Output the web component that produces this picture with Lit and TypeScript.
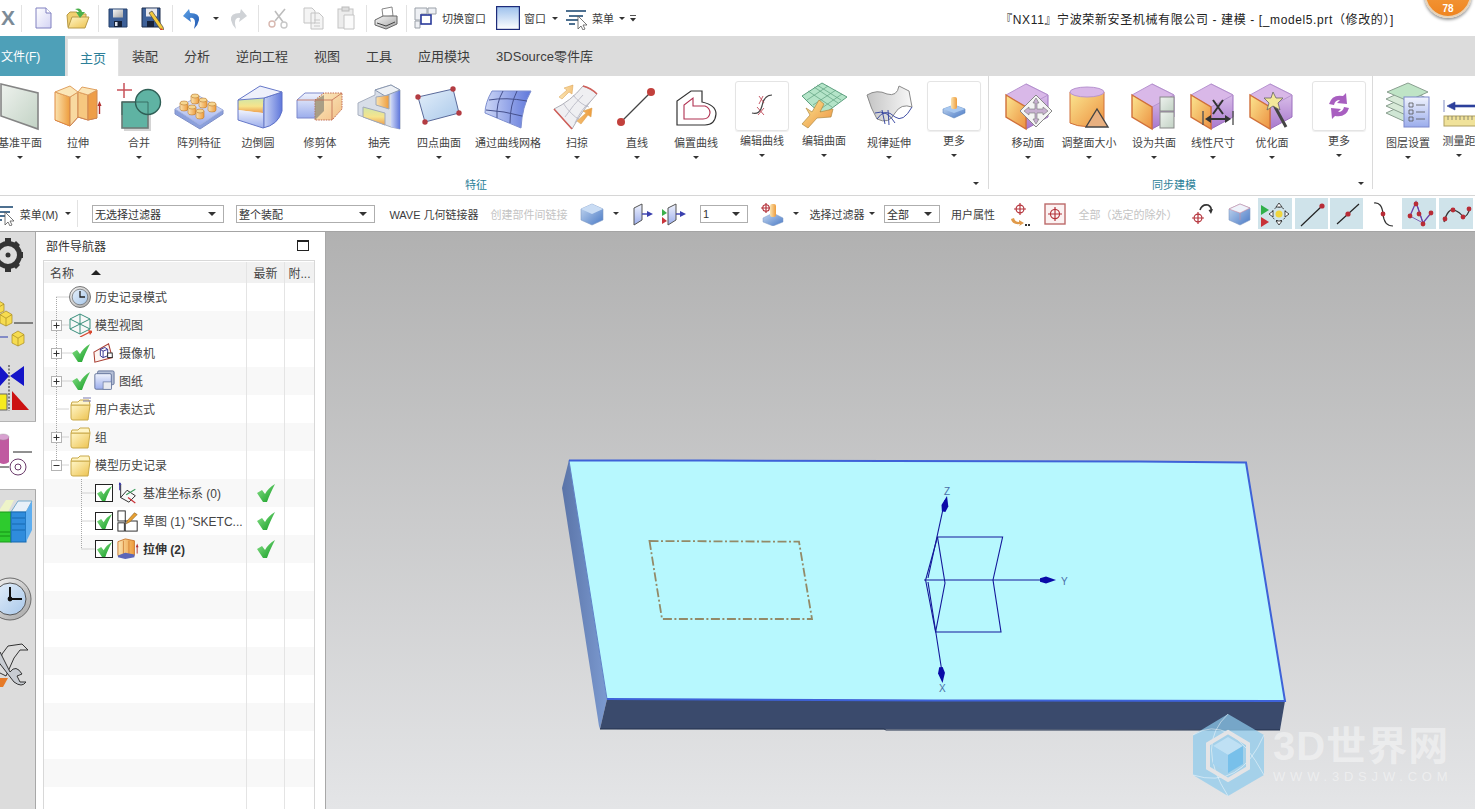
import { LitElement, html, css, svg, SVGTemplateResult, TemplateResult } from 'lit';
import { customElement } from 'lit/decorators.js';

// --- shared pieces of the icons ---
const cube = (over: SVGTemplateResult = svg``) => svg`
  <path d="M22 1 L44 12 L44 34 L22 46 Z" fill="url(#gPu)" stroke="#9b6fbe"/>
  <path d="M22 1 L44 12 L22 24 L2 12 Z" fill="#d9b8e8" stroke="#b794d0"/>
  <path d="M2 12 L22 24 L22 46 L2 34 Z" fill="url(#gYe)" stroke="#d0703a" stroke-width="1.4"/>
  ${over}`;

const cross = (x: number, y: number, r = 6) => svg`
  <circle cx=${x} cy=${y} r=${r * 0.65} fill="none" stroke="#b5343c" stroke-width="1.2"/>
  <path d="M${x - r} ${y} H${x + r} M${x} ${y - r} V${y + r}" stroke="#b5343c" stroke-width="1.2"/>`;

const folder = (lines = false) => svg`
  <path d="M3 8 L3 21 Q3 23 5 23 L20 23 L22 8 Z" fill="url(#gFo)" stroke="#c9a94a"/>
  <path d="M3 8 L4 5 L10 5 L12 3 L21 3 L22 8 Z" fill="#fff4c4" stroke="#c9a94a"/>
  ${lines ? svg`<path d="M15 1 H23 M15 4 H23" stroke="#7b7bb0" stroke-width="1.2"/>` : ''}`;

const tick = svg`<path d="M0 9 L5 6 L8 10 C10 6 13 3 18 0 C15 6 12 12 10 18 L6 18 Z" fill="url(#gGn)"/>`;

const ICONS: Record<string, SVGTemplateResult> = {
  // ribbon, 48 box
  plane: svg`<path d="M5 1 L42 10 L42 46 L5 33 Z" fill="url(#gPl)" stroke="#858585" stroke-width="1.6"/>`,
  extrude: svg`
    <path d="M1 37 L16 43 L24 34 L34 37 L43 35 L34 30 L14 30 Z" fill="#8f9fe0" stroke="#c06a50"/>
    <path d="M1 9 L16 14 L16 43 L1 37 Z" fill="url(#gOr)" stroke="#e08a40"/>
    <path d="M16 14 L24 9 L24 34 L16 43 Z" fill="#f8d9a0" stroke="#d08850"/>
    <path d="M24 9 L34 12 L34 37 L24 34 Z" fill="#f6c880" stroke="#d08850"/>
    <path d="M34 12 L43 7 L43 35 L34 37 Z" fill="#ee9e48" stroke="#d08850"/>
    <path d="M1 9 L16 3 L24 9 L16 14 Z M24 9 L28 4 L43 7 L34 12 Z" fill="#fbe6b8" stroke="#e0a060"/>
    <path d="M45.5 31 V21" stroke="#b03030" stroke-width="1.4"/><path d="M43.5 23 L45.5 18 L47.5 23 Z" fill="#b03030"/>`,
  merge: svg`
    <rect x="9" y="21" width="27" height="27" fill="#d4d4d4"/>
    <rect x="7" y="19" width="26" height="26" fill="#5fb3a3" stroke="#6d7a76" stroke-width="1.6"/>
    <circle cx="33" cy="19" r="12.5" fill="#5fb3a3" stroke="#2f5f56" stroke-width="1.4"/>
    <path d="M7 32 V19 H33 V31" fill="none" stroke="#2f5f56" stroke-width=".8"/>
    <path d="M2 7 H17 M9 0 V15" stroke="#c8525a" stroke-width="1.5"/>`,
  pattern: svg`
    <path d="M0 26 L25 42 L48 27 L48 31 L25 46 L0 31 Z" fill="#8ba0dc" stroke="#8090c8"/>
    <path d="M0 26 L24 13 L48 27 L25 42 Z" fill="url(#gBl)" stroke="#a4b2e0"/>
    ${[[20, 13], [28, 17], [37, 21], [9, 20], [17, 24], [25, 28]].map(([x, y]) => svg`
      <path d="M${x - 4} ${y} V${y + 6} A4 2 0 0 0 ${x + 4} ${y + 6} V${y} Z" fill="url(#gOr)" stroke="#bb7b30" stroke-width=".6"/>
      <ellipse cx=${x} cy=${y} rx="4" ry="2" fill="#f6d690" stroke="#bb7b30" stroke-width=".6"/>`)}`,
  blend: svg`
    <path d="M4 17 L26 3 L48 9 L48 28 Q48 40 29 45 L4 37 Z" fill="#eef1fb"/>
    <path d="M29 24 Q29 20 30 15 L48 9 L48 28 Q44 42 29 45 Z" fill="url(#gBlD)" stroke="#5b6fc8"/>
    <path d="M4 17 L30 15 Q28 28 29 30 L4 27 Z" fill="url(#gBand)"/>
    <path d="M4 27 L29 30 L29 45 L4 37 Z" fill="url(#gBl)"/>
    <path d="M4 17 L26 3 L48 9 L30 15 Z" fill="#eef0fb" stroke="#6678c8"/>
    <path d="M4 17 V37 L29 45 M30 15 V45" fill="none" stroke="#6678c8"/>`,
  trim: svg`
    <path d="M1 17 L9 10 L28 10 L28 35 L1 35 Z" fill="url(#gBl)" stroke="#7d88cc"/>
    <path d="M19 17 L28 10 L46 10 L46 26 L36 37 L19 37 Z" fill="url(#gYeL)" stroke="#c06a50" stroke-dasharray="1.5 1"/>
    <path d="M19 17 L28 12 L28 28 L19 37 Z" fill="#8f8a78" opacity=".75"/>
    <path d="M1 17 H19 M19 17 H36 L46 10 M36 17 V37" fill="none" stroke="#c06a50" stroke-width=".8"/>`,
  shell: svg`
    <path d="M3 20 L20 12 L20 7 L36 2 L45 7 L45 46 L36 44 L3 32 Z" fill="#d8dee8" stroke="#a8b0c0"/>
    <path d="M36 11 L45 7 L45 46 L36 44 Z" fill="url(#gBlD)"/>
    <path d="M20 7 L36 2 L45 7 L30 13 Z" fill="#eef1f5" stroke="#8a98b0"/>
    <path d="M8 24 L30 30 L30 42 L8 34 Z" fill="url(#gBand)" stroke="#a0a8b8"/>
    <path d="M21 14 L34 12 L34 26 L21 22 Z" fill="url(#gOr)" stroke="#a0a8b8"/>`,
  fourpt: svg`
    <path d="M3 14 L38 6 L44 30 L10 39 Z" fill="url(#gSky)" stroke="#5a6a9a"/>
    ${[[3, 14], [38, 6], [44, 30], [10, 39]].map(([x, y]) => svg`<circle cx=${x} cy=${y} r="2.7" fill="#b33c42"/>`)}`,
  mesh: svg`
    <path d="M8 8 L47 8 Q38 24 37 45 Q20 38 1 30 Q1 20 8 8 Z" fill="url(#gBlD)" stroke="#7e8fd0"/>
    <path d="M5 17 Q22 14 43 18 M2 27 Q20 28 38 33 M19 8 Q12 20 13 35 M33 8 Q26 22 26 40" fill="none" stroke="#45508c" stroke-width="1"/>`,
  sweep: svg`
    <path d="M1 26 Q18 18 30 3 Q38 5 44 11 Q30 26 19 46 Q10 36 1 26 Z" fill="#efeff2" stroke="#b0b0b8"/>
    <path d="M10 20 Q18 32 27 37 M20 12 Q28 22 36 24 M12 34 Q20 22 30 12 M22 40 Q28 26 38 18" fill="none" stroke="#b4b4c0" stroke-width=".8"/>
    <path d="M1 26 Q10 36 19 46 M30 3 Q38 5 44 11" fill="none" stroke="#d0605a" stroke-width="1.6"/>
    <path d="M6 14 L14 7 L11 5 L20 2 L19 11 L16 9 L9 16 Z M24 38 L33 30 L30 28 L39 25 L38 34 L35 32 L28 41 Z" fill="url(#gOr)" stroke="#d8a050" stroke-width=".5"/>`,
  line: svg`<path d="M8 39 L38 9" stroke="#444" stroke-width="1.2"/><circle cx="8" cy="39" r="4" fill="#c2403c"/><circle cx="38" cy="9" r="4" fill="#c2403c"/>`,
  offset: svg`
    <path d="M19 8 H30 V19 Q44 22 44 31 Q43 42 33 42 H5 V18 Z" fill="#fff" stroke="#333" stroke-width="1.2"/>
    <path d="M12 36 V22 L21 15 V23 H33 Q38 25 38 30 Q37 36 31 36 Z" fill="none" stroke="#b03050" stroke-width="1.1"/>`,
  editcurve: svg`
    <path d="M14 31 Q22 33 24 24 Q26 13 34 13" fill="none" stroke="#444" stroke-width="1.2"/>
    <path d="M21 14 L26 21 M25 14 L21 22 M19 25 L26 33 M26 26 L20 33" stroke="#c04858" stroke-width=".9"/>`,
  editsurf: svg`
    <path d="M2 14 L22 1 L47 15 L24 32 Q12 26 2 14 Z" fill="#b4e4c8" stroke="#5ea080"/>
    <path d="M8 9 L32 25 M14 5 L38 21 M17 3 L41 18 M7 18 L28 4 M13 23 L36 8 M19 28 L42 12" stroke="#5ea080" stroke-width=".7"/>
    <path d="M19 18 L24 22 L20 30 L33 27 L31 35 L17 36 L8 46 L2 42 L10 33 L6 26 L12 30 Z" fill="url(#gYe)" stroke="#b08a40" stroke-width=".7"/>`,
  law: svg`
    <path d="M2 12 Q12 6 22 11 Q32 14 34 3 L44 8 L47 24 Q36 20 30 30 Q24 42 12 36 Q6 26 2 12 Z" fill="url(#gSilk)" stroke="#8a8a8a"/>
    <path d="M12 36 Q20 24 30 34 Q38 40 47 24 M10 30 Q22 26 30 40 M17 27 L20 41 M23 27 L24 42" fill="none" stroke="#2c3c9c" stroke-width=".9"/>`,
  more: svg`
    <path d="M13 27 L24 23 L35 27 L35 31 L24 36 L13 31 Z" fill="url(#gSt)" stroke="#5f88c0" stroke-width=".6"/>
    <path d="M13 27 L24 31 L35 27 L24 23 Z" fill="#a8c8f0"/>
    <rect x="21" y="15" width="6" height="12" rx="2" fill="url(#gOr)"/>`,
  movef: cube(svg`
    <path d="M32 12 L48 28 L32 44 L16 28 Z" fill="#f4f4f4" stroke="#888"/>
    <path d="M32 15 L35 20 L33 20 V26 H39 V24 L44 28 L39 32 V30 H33 V36 H35 L32 41 L29 36 H31 V30 H25 V32 L20 28 L25 24 V26 H31 V20 H29 Z" fill="#c7afd0" stroke="#777" stroke-width=".6"/>`),
  resize: svg`
    <path d="M5 9 V40 Q20 47 39 40 V9 Z" fill="url(#gYe)" stroke="#d0703a"/>
    <ellipse cx="22" cy="9" rx="17" ry="5" fill="#d9b8e8" stroke="#b794d0"/>
    <path d="M32 26 L43 44 L21 44 Z" fill="#e8b080" stroke="#444" stroke-width="1.4"/>`,
  coplanar: cube(svg`
    <rect x="30" y="14" width="14" height="14" fill="url(#gPl)" stroke="#888"/>
    <rect x="30" y="29" width="14" height="16" fill="url(#gPl)" stroke="#888"/>`),
  dim: cube(svg`
    <path d="M24 17 L34 31 M34 17 L24 31" stroke="#333" stroke-width="2"/>
    <path d="M14 28 V42 M44 28 V42" stroke="#555" stroke-width="1.4"/>
    <path d="M16 36 L22 32 V35 H36 V32 L42 36 L36 40 V37 H22 V40 Z" fill="#333"/>`),
  optimize: cube(svg`
    <path d="M26 22 L38 44" stroke="#444" stroke-width="3"/>
    <path d="M25 9 L28 15 L35 15 L30 20 L32 27 L25 23 L19 27 L21 20 L16 15 L23 15 Z" fill="#f3e89a" stroke="#666" stroke-width=".8"/>`),
  cycle: svg`
    <path d="M14 22 Q17 12 28 14 L31 11 L32 22 L22 21 L25 18 Q20 18 19 23 Z M34 26 Q31 36 20 34 L17 37 L16 26 L26 27 L23 30 Q28 30 29 25 Z" fill="#a85fc0"/>`,
  layers: svg`
    <path d="M2 30 L24 20 L44 30 L24 40 Z" fill="#cfe6d4" stroke="#8aa090"/>
    <path d="M2 23 L24 13 L44 23 L24 33 Z" fill="#d8ead8" stroke="#8aa090"/>
    <path d="M2 16 L24 6 L44 16 L24 26 Z" fill="#d8ead8" stroke="#8aa090"/>
    <path d="M3 9 L24 0 L44 9 L24 18 Z" fill="#bfe4c6" stroke="#8aa090"/>
    <rect x="20" y="14" width="25" height="30" fill="url(#gBl)" stroke="#7d88cc"/>
    <path d="M25 20 h4 v4 h-4 Z M25 27 h4 v4 h-4 Z M25 34 h4 v4 h-4 Z M32 22 h9 M32 29 h9 M32 36 h9" fill="none" stroke="#555" stroke-width=".8"/>`,
  measure: svg`
    <path d="M9 18 V30 M12 24 L20 20 V23 H48 V25 H20 V28 Z" fill="#2d3f9c" stroke="#2d3f9c" stroke-width=".6"/>
    <rect x="9" y="34" width="40" height="10" fill="#f0e29a" stroke="#b0a060"/>
    <path d="M13 34 v4 M17 34 v4 M21 34 v4 M25 34 v4 M29 34 v4 M33 34 v4 M37 34 v4 M41 34 v4" stroke="#776" stroke-width=".8"/>`,

  // quick access, 24 box
  doc: svg`<path d="M5 2 H15 L20 7 V22 H5 Z" fill="url(#gLav)" stroke="#8080c0"/><path d="M15 2 V7 H20" fill="#fff" stroke="#8080c0"/>`,
  open: svg`
    <path d="M2 21 L1 9 L4 6 L11 6 L13 8 L20 8 L20 12 Z" fill="#f0d070" stroke="#b89a48"/>
    <path d="M2 22 L6 11 L23 11 L19 22 Z" fill="url(#gFo)" stroke="#b89a48"/>
    <path d="M9 3 Q15 1 16 6 L19 6 L14 12 L10 6 L13 6 Q12 4 9 3 Z" fill="#4bb04b"/>`,
  save: svg`<path d="M3 3 H21 V21 H3 Z" fill="#3d6098" stroke="#24406c"/><rect x="7" y="3.5" width="10" height="8" fill="url(#gGr)"/><rect x="8" y="15" width="8" height="6" fill="#16223a"/><rect x="9" y="16" width="2.5" height="4" fill="#dfe4ee"/>`,
  saveas: svg`<path d="M2 2 H20 V21 H2 Z" fill="#3d6098" stroke="#1c2c4c"/><rect x="6" y="2.5" width="11" height="8" fill="#e8e8ec"/><rect x="7" y="15" width="7" height="6" fill="#16223a"/>
    <path d="M9 7 L12 5 L23 21 L24 25 L20 23 Z" fill="#f2c93a" stroke="#444" stroke-width=".7"/><path d="M21 22 L24 25 L20 24 Z" fill="#d33"/>`,
  undo: svg`<path d="M4 10 L10 3 L11 7 Q21 7 20 14 Q19 19 15 23 Q17 15 15 13 Q13 11 11 12 L12 16 Z" fill="url(#gUn)"/>`,
  redo: svg`<path d="M21 10 L15 3 L14 7 Q4 7 5 14 Q6 19 10 23 Q8 15 10 13 Q12 11 14 12 L13 16 Z" fill="#cfd2d6"/>`,
  cut: svg`<path d="M19 3 L9 15 M9 5 L17 16" stroke="#bdbdbd" stroke-width="1.6"/><circle cx="6" cy="18" r="3" fill="#fff" stroke="#d8b8b0" stroke-width="1.4"/><circle cx="18" cy="19" r="3" fill="#fff" stroke="#c8c8c8" stroke-width="1.4"/>`,
  copy: svg`<path d="M3 2 H11 L14 5 V17 H3 Z M10 7 H18 L22 11 V23 H10 Z" fill="#f4f4f4" stroke="#c4c4c4"/><path d="M13 14 H19 M13 17 H19 M13 20 H19" stroke="#c8c8c8"/>`,
  paste: svg`<rect x="4" y="3" width="15" height="19" fill="#ececec" stroke="#c4c4c4"/><rect x="8" y="1" width="7" height="4" fill="#ddd" stroke="#bbb"/><path d="M10 9 H20 V23 H10 Z" fill="#fafafa" stroke="#c4c4c4"/>`,
  print: svg`<path d="M8 3 L18 1 L19 10 L9 11 Z" fill="#fff" stroke="#888"/><path d="M1 14 L9 10 L23 10 L23 18 L12 23 L1 19 Z" fill="url(#gGr)" stroke="#666"/><path d="M3 17 L12 20 L21 16" fill="none" stroke="#444"/>`,
  swap: svg`<path d="M1 2 H13 V8 H7 V14 H1 Z M1 15 H6 V22 H1 Z M14 2 H22 V8 H14 Z" fill="#eef0f4" stroke="#9aa0a8"/><rect x="7" y="9" width="10" height="9" fill="#fff" stroke="#2a3a9a" stroke-width="1.6"/>`,
  win: svg`<rect x=".5" y=".5" width="23" height="23" fill="url(#gWin)" stroke="#1d2b7a" stroke-width="1.4"/>`,
  menu: svg`<path d="M1 5 H21 M4 10 H18 M1 14 H13 M4 18 H10" stroke="#4d7090" stroke-width="2"/><path d="M13 10 V23 L16 20 L18 24 L20 23 L18 19 L22 19 Z" fill="#fff" stroke="#555" stroke-width=".8"/>`,

  // command bar
  boxb: svg`<path d="M12 2 L23 7 V18 L12 23 L1 18 V7 Z" fill="url(#gSt)" stroke="#7f9ac4" stroke-width=".6"/><path d="M12 2 L23 7 L12 12 L1 7 Z" fill="#c9dcf4"/>`,
  toface: svg`<path d="M5 6 L13 2 V18 L5 23 Z" fill="url(#gBl)" stroke="#555"/><path d="M13 12 H21" stroke="#3a3fae" stroke-width="1.4"/><path d="M18 9 L24 12 L18 15 Z" fill="#3a3fae"/>`,
  toface2: svg`<path d="M6 6 L14 2 V18 L6 23 Z" fill="url(#gBl)" stroke="#555"/><path d="M14 12 H21" stroke="#3a3fae" stroke-width="1.4"/><path d="M18 9 L24 12 L18 15 Z" fill="#3a3fae"/><path d="M0 7 L5 11 L0 14 Z" fill="#3cb04a"/><path d="M0 15 L5 19 L0 22 Z" fill="#c8343a"/>`,
  peg: svg`${cross(6, 6, 5)}<path d="M3 16 L13 11 L23 16 L23 20 L13 24 L3 20 Z" fill="url(#gSt)" stroke="#7f9ac4" stroke-width=".5"/><rect x="10" y="2" width="6" height="13" rx="2" fill="url(#gOr)"/>`,
  crossarrow: svg`${cross(13, 7, 6)}<path d="M4 17 Q5 23 13 22 L12 24 L17 21 L12 18 L12 20 Q8 20 7 16 Z" fill="#e09a4a"/><path d="M18 22 h2 v2 h-2 Z M21 22 h2 v2 h-2 Z" fill="#333"/>`,
  crossbox: svg`<rect x="2" y="2" width="20" height="20" fill="#fbf2f2" stroke="#bc6a6a" stroke-width="1.4"/>${cross(12, 12, 7)}`,
  crossrot: svg`${cross(9, 16, 6)}<path d="M11 8 Q13 2 19 3 Q23 5 22 9" fill="none" stroke="#333" stroke-width="1.6"/><path d="M19.5 8 L24 7 L22 12 Z" fill="#333"/>`,
  bowl: svg`<path d="M2 7 L13 2 L23 6 V18 L13 23 L2 18 Z" fill="url(#gSt)" stroke="#7f9ac4" stroke-width=".6"/><path d="M2 7 L13 2 L23 6 L13 11 Z" fill="#eef3fb" stroke="#d08aa0" stroke-width=".6"/><path d="M13 11 V18" stroke="#d08aa0" stroke-width=".6"/>`,
  tselect: svg`<path d="M2 6 L10 11 L2 16 Z" fill="#2fb04a"/><path d="M2 18 L10 23 L2 28 Z" fill="#c83238"/>
    <circle cx="20" cy="15" r="7" fill="none" stroke="#333" stroke-dasharray="2 2"/><circle cx="20" cy="15" r="3.5" fill="#f1d63c"/>
    <path d="M20 4 L23 8 H17 Z M20 26 L23 22 H17 Z M10 15 L14 12 V18 Z M30 15 L26 12 V18 Z" fill="#fff" stroke="#222" stroke-width=".8"/>`,
  tline: svg`<path d="M5 27 L26 7" stroke="#222" stroke-width="1.2"/><circle cx="26" cy="7" r="2.6" fill="#b82c36"/>`,
  tmid: svg`<path d="M6 25 L28 5" stroke="#222" stroke-width="1.2"/><circle cx="17" cy="15" r="2.6" fill="#b82c36"/>`,
  tcurve: svg`<path d="M1 4 Q9 3 10 15 Q11 27 20 27" fill="none" stroke="#333" stroke-width="1.2"/><circle cx="10" cy="15" r="2.4" fill="#b82c36"/>`,
  tpoly: svg`<path d="M7 17 L13 3 L20 24 L28 14" fill="none" stroke="#6a3fa8" stroke-width="1.3"/><path d="M13 3 L20 24 M7 17 L20 24" fill="none" stroke="#6a3fa8" stroke-width=".8"/>
    ${[[7, 17], [13, 5], [20, 25], [28, 14], [16, 15]].map(([x, y]) => svg`<circle cx=${x} cy=${y} r="2.4" fill="#b82c36"/>`)}`,
  tspline: svg`<path d="M4 23 Q8 9 14 11 Q20 13 23 18 Q28 18 30 8" fill="none" stroke="#333" stroke-width="1.2"/>
    ${[[5, 20], [13, 11], [23, 18], [29, 10]].map(([x, y]) => svg`<circle cx=${x} cy=${y} r="2.4" fill="#b82c36"/>`)}`,

  // navigator tree
  clock: svg`<circle cx="12" cy="12" r="10.5" fill="url(#gGr)" stroke="#777"/><circle cx="12" cy="12" r="7.8" fill="url(#gSky)" stroke="#555" stroke-width=".6"/><path d="M12 6 V12 H17" fill="none" stroke="#222" stroke-width="1.3"/>`,
  viewc: svg`<path d="M12 1 L22 6 V16 L12 21 L2 16 V6 Z M2 6 L12 11 L22 6 M12 11 V21 M2 16 L12 11 L22 16 M12 1 V11" fill="none" stroke="#3a8f7c" stroke-width="1"/><path d="M12 24 L22 19" stroke="#d84830" stroke-width="1.3"/><path d="M20 17 L25 18 L22 22 Z" fill="#d84830"/>`,
  camera: svg`<path d="M1 11 L17 2 L21 17 L2 22 Z" fill="#fdf6f2" stroke="#a83c30" stroke-width="1.1"/><path d="M8 8 L13 6 L16 8 V15 L11 17 L8 15 Z M8 8 L11 10 L16 8 M11 10 V17" fill="#fff" stroke="#2a2a8c"/><rect x="16" y="12" width="5" height="5" fill="#fff" stroke="#222"/>`,
  sheets: svg`<rect x="5" y="1" width="18" height="15" rx="1.5" fill="#b4bfd6" stroke="#5f7098"/><rect x="2" y="4" width="18" height="17" rx="1.5" fill="url(#gBl)" stroke="#5f7098"/><rect x="11" y="13" width="9" height="8" fill="#e8eaf0" stroke="#5f7098" stroke-width=".7"/>`,
  folderopen: folder(true),
  folder: folder(),
  csys: svg`<path d="M4 3 V17 L13 22 L20 15 L11 9 L4 17" fill="none" stroke="#222"/><path d="M3 1 V9" stroke="#2a2a9c" stroke-width="1.2"/><path d="M2 3 L3 0 L5 3 Z" fill="#2a2a9c"/><path d="M10 14 L20 8" stroke="#3a9c5a" stroke-width="1.2"/><path d="M12 17 L20 23" stroke="#c83238" stroke-width="1.4"/>`,
  sketch: svg`<rect x="1" y="1" width="8" height="11" fill="#fff" stroke="#222"/><rect x="1" y="14" width="7" height="9" fill="#fff" stroke="#222"/><rect x="9" y="12" width="13" height="11" fill="#fff" stroke="#222"/><path d="M11 12 L19 3 L22 5 L14 13 L10 15 Z" fill="#e8a030" stroke="#7a5520" stroke-width=".6"/>`,
  minibody: svg`<path d="M1 4 L9 1 L19 3 V19 L9 21 L1 19 Z" fill="url(#gOr)" stroke="#c9762c"/><path d="M7 3 V20 M13 3 V20" stroke="#c9762c" stroke-width=".8"/><path d="M1 19 L9 16 L19 18 L19 21 L9 23 L1 21 Z" fill="#5c66b8"/><path d="M22 17 V9" stroke="#b03030"/><path d="M20.5 10 L22 6 L23.5 10 Z" fill="#b03030"/>`,
};

const icon = (name: string, size = 24, box = size) =>
  html`<svg class="ic" width=${size} height=${size} viewBox=${`0 0 ${box} ${box}`}>${ICONS[name]}</svg>`;

// --- ribbon data ---
interface Cmd { label: string; w: number; icon: string; boxed?: boolean; up?: boolean; }

const FEATURES: Cmd[] = [
  { label: '基准平面', w: 60, icon: 'plane' },
  { label: '拉伸', w: 56, icon: 'extrude' },
  { label: '合并', w: 66, icon: 'merge' },
  { label: '阵列特征', w: 54, icon: 'pattern' },
  { label: '边倒圆', w: 64, icon: 'blend' },
  { label: '修剪体', w: 60, icon: 'trim' },
  { label: '抽壳', w: 58, icon: 'shell' },
  { label: '四点曲面', w: 62, icon: 'fourpt' },
  { label: '通过曲线网格', w: 76, icon: 'mesh' },
  { label: '扫掠', w: 62, icon: 'sweep' },
  { label: '直线', w: 58, icon: 'line' },
  { label: '偏置曲线', w: 60, icon: 'offset' },
  { label: '编辑曲线', w: 72, icon: 'editcurve', boxed: true, up: true },
  { label: '编辑曲面', w: 52, icon: 'editsurf', up: true },
  { label: '规律延伸', w: 78, icon: 'law' },
  { label: '更多', w: 52, icon: 'more', boxed: true, up: true },
];

const SYNC: Cmd[] = [
  { label: '移动面', w: 68, icon: 'movef' },
  { label: '调整面大小', w: 54, icon: 'resize' },
  { label: '设为共面', w: 76, icon: 'coplanar' },
  { label: '线性尺寸', w: 42, icon: 'dim' },
  { label: '优化面', w: 76, icon: 'optimize' },
  { label: '更多', w: 58, icon: 'cycle', boxed: true, up: true },
];

const LAST: Cmd[] = [
  { label: '图层设置', w: 58, icon: 'layers' },
  { label: '测量距', w: 44, icon: 'measure', up: true },
];

const TABS = ['装配', '分析', '逆向工程', '视图', '工具', '应用模块', '3DSource零件库'];

// --- bars: [gap before, width, content] ---
type Slot = [number, number, TemplateResult];
const sep = html`<i class="sep"></i>`;
const drop = html`<i class="drop"></i>`;
const txt = (s: string, cls = '') => html`<span class="tx ${cls}">${s}</span>`;
const sel = (s: string) => html`<div class="select"><span>${s}</span><i class="drop"></i></div>`;
const tog = (name: string) =>
  html`<div class="toggle"><svg width="32" height="30" viewBox="0 0 32 30">${ICONS[name]}</svg></div>`;

const QUICK: Slot[] = [
  [0, 16, html`<span class="logo">X</span>`],
  [5, 1, sep], [9, 24, icon('doc')], [11, 24, icon('open')],
  [8, 1, sep], [7, 24, icon('save')], [10, 24, icon('saveas')],
  [8, 1, sep], [6, 24, icon('undo')], [10, 6, drop], [7, 24, icon('redo')],
  [8, 1, sep], [7, 24, icon('cut')], [11, 24, icon('copy')], [9, 24, icon('paste')],
  [8, 1, sep], [7, 24, icon('print')],
  [8, 1, sep], [7, 24, icon('swap')], [4, 44, txt('切换窗口')],
  [10, 24, icon('win')], [4, 22, txt('窗口')], [6, 6, drop],
  [7, 24, icon('menu')], [3, 22, txt('菜单')], [5, 6, drop],
  [5, 6, html`<svg width="6" height="7" viewBox="0 0 6 7"><path d="M0 .5 H6" stroke="#555"></path><path d="M0 3 H6 L3 6.5 Z" fill="#333"></path></svg>`],
];

const COMMANDS: Slot[] = [
  [-8, 24, icon('menu')], [0, 46, txt('菜单(M)')], [0, 12, drop],
  [3, 1, sep], [14, 132, sel('无选择过滤器')], [12, 139, sel('整个装配')],
  [14, 90, txt('WAVE 几何链接器')], [11, 78, txt('创建部件间链接', 'off')],
  [12, 24, icon('boxb')], [9, 6, drop], [9, 26, icon('toface')], [8, 24, icon('toface2')],
  [14, 48, sel('1')], [12, 24, icon('peg')], [9, 6, drop], [9, 58, txt('选择过滤器')], [3, 6, drop],
  [9, 56, sel('全部')], [11, 44, txt('用户属性')], [12, 24, icon('crossarrow')],
  [12, 24, icon('crossbox')], [13, 96, txt('全部（选定的除外）', 'off')],
  [13, 24, icon('crossrot')], [14, 24, icon('bowl')],
  [7, 34, tog('tselect')], [3, 33, tog('tline')], [2, 33, tog('tmid')],
  [10, 20, html`<svg width="20" height="30" viewBox="0 0 20 30">${ICONS.tcurve}</svg>`],
  [9, 34, tog('tpoly')], [3, 34, tog('tspline')],
];

// --- navigator data ---
interface Node { label: string; icon: string; kind: 'root' | 'check' | 'child'; exp?: '+' | '-'; bold?: boolean; latest?: boolean; }

const TREE: Node[] = [
  { label: '历史记录模式', icon: 'clock', kind: 'root' },
  { label: '模型视图', icon: 'viewc', kind: 'root', exp: '+' },
  { label: '摄像机', icon: 'camera', kind: 'check', exp: '+' },
  { label: '图纸', icon: 'sheets', kind: 'check', exp: '+' },
  { label: '用户表达式', icon: 'folderopen', kind: 'root' },
  { label: '组', icon: 'folder', kind: 'root', exp: '+' },
  { label: '模型历史记录', icon: 'folder', kind: 'root', exp: '-' },
  { label: '基准坐标系 (0)', icon: 'csys', kind: 'child', latest: true },
  { label: '草图 (1) "SKETC...', icon: 'sketch', kind: 'child', latest: true },
  { label: '拉伸 (2)', icon: 'minibody', kind: 'child', latest: true, bold: true },
];
const TREE_ROWS = 19;

@customElement('app-root')
export class AppRoot extends LitElement {
  static styles = css`
    :host {
      display: flex;
      flex-direction: column;
      width: 1475px;
      height: 809px;
      overflow: hidden;
      position: relative;
      background: #fff;
      color: #444;
      font: 11px "Liberation Sans", "Noto Sans CJK SC", sans-serif;
    }
    .defs { position: absolute; width: 0; height: 0; }
    .ic { display: block; flex: none; }

    .bar { display: flex; align-items: center; flex: none; }
    .slot { display: flex; align-items: center; justify-content: center; flex: none; white-space: nowrap; }
    .sep { display: block; width: 1px; height: 27px; background: #e2e2e2; }
    .drop { display: block; width: 0; height: 0; border: 3px solid transparent; border-top: 3px solid #333; border-bottom: 0; }
    .tx { color: #3c3c3c; }
    .tx.off { color: #c4c4c4; }

    .quick { height: 36px; }
    .logo { font-size: 21px; font-weight: 700; color: #7c8b97; }
    .title { margin-left: auto; padding-right: 81px; font-size: 12px; letter-spacing: .62px; color: #222; white-space: nowrap; }
    .badge {
      position: absolute; left: 1424px; top: -30px; width: 48px; height: 48px;
      box-sizing: border-box; padding-top: 31px; border-radius: 50%;
      background: linear-gradient(#f6a94e, #ef8420);
      border: 2px solid #e6d2b8; box-shadow: 0 2px 3px #999;
      color: #fff; font-size: 10px; font-weight: 700; text-align: center;
    }

    .tabs { display: flex; height: 40px; flex: none; background: #dcdcdc; align-items: flex-end; font-size: 13px; }
    .tabs > div { display: flex; align-items: center; height: 40px; box-sizing: border-box; padding: 0 13px 2px; color: #3c3c3c; white-space: nowrap; }
    .tabs .file { width: 65px; padding: 0 0 2px 1px; background: #4ea0b8; color: #fff; font-size: 12px; margin-right: 2px; }
    .tabs .home { height: 38px; background: #fff; color: #2c7f98; border: 1px solid #e2e2e2; border-bottom: 0; width: 52px; justify-content: center; padding: 0; }

    .ribbon { display: flex; height: 119px; flex: none; }
    .group { display: flex; flex-direction: column; position: relative; flex: none; }
    .group.first { margin-left: -10px; width: 998px; border-right: 1px solid #dadada; margin-bottom: 6px; }
    .group.second { width: 384px; border-right: 1px solid #dadada; margin-bottom: 6px; padding-left: 5px; box-sizing: border-box; }
    .group.third { padding-left: 6px; }
    .cmds { display: flex; height: 98px; flex: none; }
    .cmd { flex: none; display: flex; flex-direction: column; align-items: center; padding-top: 8px; white-space: nowrap; color: #444; }
    .cmd .slot { height: 46px; width: 48px; overflow: visible; }
    .cmd .ic { overflow: visible; }
    .cmd .lab { margin-top: 6px; height: 15px; line-height: 15px; }
    .cmd .drop { margin-top: 5px; }
    .cmd.up { padding-top: 5px; }
    .cmd.up .slot { height: 50px; }
    .cmd.up .lab { margin-top: 3px; }
    .cmd.boxed .slot { width: 54px; box-sizing: border-box; border: 1px solid #e4e4e4; border-radius: 3px; box-shadow: 0 1px 1px #eee; }
    .glabel { margin-top: 4px; text-align: center; color: #2c7f98; line-height: 14px; }
    .first .glabel { padding-right: 26px; }
    .second .glabel { padding-right: 18px; }
    .gexp { position: absolute; right: 9px; bottom: 4px; }
    .second .gexp { right: 8px; }

    .commandbar { height: 37px; box-sizing: border-box; border-top: 1px solid #d6d6d6; border-bottom: 1px solid #a4a4a4; }
    .select {
      display: flex; align-items: center; justify-content: space-between;
      width: 100%; height: 18px; box-sizing: border-box; padding: 0 7px 0 2px;
      border: 1px solid #aeaeae; color: #333; background: #fff;
    }
    .select .drop { border-width: 4px 4px 0; }
    .toggle { display: flex; align-items: center; justify-content: center; width: 100%; height: 31px; background: #cfe3ea; }

    .main { flex: 1; display: flex; min-height: 0; }
    .rail { width: 36px; flex: none; display: flex; flex-direction: column; border-right: 1px solid #a8a8a8; box-sizing: border-box; background: #dcdcdc; }
    .rail svg { display: block; }
    .rail .active { background: #fff; height: 69px; margin-right: -1px; border-top: 1px solid #b4b4b4; border-bottom: 1px solid #b4b4b4; box-sizing: border-box; }
    .rail .top { height: 189px; }
    .rail .bottom { flex: 1; }

    .nav { width: 290px; flex: none; box-sizing: border-box; border-right: 1px solid #a8a8a8; padding: 0 10px 0 7px; display: flex; flex-direction: column; background: #fff; }
    .nav-head { display: flex; align-items: center; justify-content: space-between; height: 28px; padding: 0 6px 2px 3px; box-sizing: border-box; font-size: 12px; color: #333; flex: none; }
    .maxi { width: 12px; height: 11px; box-sizing: border-box; border: 1px solid #222; border-top-width: 2px; }
    .table { flex: 1; border: 1px solid #d8d8d8; border-bottom: 0; position: relative; overflow: hidden; min-height: 0; box-sizing: border-box; }
    .row { display: flex; height: 28px; font-size: 12px; color: #444; }
    .row.head { height: 21px; margin-top: 1px; background: #f1f1f1; }
    .row:nth-child(even):not(.head) { background: #f8f8f8; }
    .c1 { width: 202px; flex: none; display: flex; align-items: center; white-space: nowrap; overflow: hidden; box-sizing: border-box; }
    .c2 { width: 38px; flex: none; display: flex; align-items: center; justify-content: center; box-sizing: border-box; border-left: 1px solid #e4e4e4; }
    .c3 { flex: 1; display: flex; align-items: center; justify-content: center; border-left: 1px solid #e4e4e4; }
    .head .c1 { padding-left: 6px; }
    .sort { width: 0; height: 0; margin-left: 17px; border: 5px solid transparent; border-top: 0; border-bottom: 5px solid #222; }
    .exp { width: 11px; height: 11px; flex: none; margin-left: 7px; position: relative; z-index: 1; background: #fff; }
    .noexp { width: 11px; flex: none; margin-left: 7px; }
    .body { position: relative; }
    .wires { position: absolute; left: 0; top: 0; }
    .row .name { position: relative; margin-bottom: 2px; }
    .root .ic { margin-left: 6px; }
    .root .name { margin-left: 3px; }
    .check .exp + .ic { margin-left: 10px; }
    .check .ic + .ic { margin-left: 3px; }
    .check .name { margin-left: 4px; }
    .cbx { width: 18px; height: 18px; margin-left: 51px; flex: none; box-sizing: border-box; border: 1.5px solid #222; background: #fff; display: flex; align-items: center; justify-content: center; }
    .child > .c1 > .ic { margin-left: 4px; }
    .child .name { margin-left: 4px; }
    .bold { font-weight: 700; color: #333; }

    .canvas { flex: 1; position: relative; background: linear-gradient(#b1b1b1, #e4e5e7); overflow: hidden; }
    .canvas > svg { position: absolute; left: 0; top: 0; }
    .mark { position: absolute; left: 947px; top: 492px; color: rgba(255, 255, 255, .42); text-align: left; white-space: nowrap; }
    .mark b { display: block; font-size: 40px; line-height: 44px; letter-spacing: 1px; }
    .mark span { display: block; margin-top: 2px; font-size: 13px; line-height: 14px; letter-spacing: 4.8px; }
  `;

  private bar(items: Slot[]) {
    return items.map(
      ([gap, w, el]) => html`<div class="slot" style="width:${w}px;margin-left:${gap}px">${el}</div>`
    );
  }

  private cmd(c: Cmd) {
    const cls = `cmd${c.boxed ? ' boxed' : ''}${c.up ? ' up' : ''}`;
    return html`
      <div class=${cls} style="width:${c.w}px">
        <div class="slot">${icon(c.icon, 48)}</div>
        <div class="lab">${c.label}</div>
        <i class="drop"></i>
      </div>
    `;
  }

  private expander(kind: '+' | '-') {
    return html`<svg class="exp" viewBox="0 0 11 11">
      <rect x=".5" y=".5" width="10" height="10" fill="#fff" stroke="#b4b4b4"></rect>
      <path d=${kind === '+' ? 'M2.5 5.5 H8.5 M5.5 2.5 V8.5' : 'M2.5 5.5 H8.5'} stroke="#333"></path>
    </svg>`;
  }

  private node(n: Node) {
    const exp = n.exp ? this.expander(n.exp) : html`<span class="noexp"></span>`;
    const latest = n.latest
      ? html`<svg width="18" height="18" viewBox="0 0 18 18">${tick}</svg>`
      : '';
    let lead: TemplateResult;
    if (n.kind === 'child') {
      lead = html`<span class="cbx"><svg width="15" height="15" viewBox="0 0 18 18">${tick}</svg></span>${icon(n.icon, 22, 24)}`;
    } else if (n.kind === 'check') {
      lead = html`${exp}<svg class="ic" width="18" height="18" viewBox="0 0 18 18">${tick}</svg>${icon(n.icon, 22, 24)}`;
    } else {
      lead = html`${exp}${icon(n.icon)}`;
    }
    return html`
      <div class="row ${n.kind}">
        <div class="c1">${lead}<span class="name ${n.bold ? 'bold' : ''}">${n.label}</span></div>
        <div class="c2">${latest}</div>
        <div class="c3"></div>
      </div>
    `;
  }

  private renderDefs() {
    const grad = (id: string, a: string, b: string, x2 = 0, y2 = 1) => svg`
      <linearGradient id=${id} x1="0" y1="0" x2=${x2} y2=${y2}><stop offset="0" stop-color=${a}></stop><stop offset="1" stop-color=${b}></stop></linearGradient>`;
    return html`<svg class="defs"><defs>
      ${grad('gOr', '#fae3b0', '#ee9c3c', 1, 0)}
      ${grad('gBl', '#f0f3fd', '#9badec')}
      ${grad('gBlD', '#ccd6f6', '#5f77db', 1, 0)}
      ${grad('gPu', '#e8d2f2', '#a878cc', 0, 1)}
      ${grad('gYe', '#fbe690', '#ec9040', 1, 1)}
      ${grad('gYeL', '#fbecc0', '#f2bf88', 1, 1)}
      ${grad('gPl', '#eef2ee', '#c2d2c4', 1, 1)}
      ${grad('gFo', '#fff6c8', '#edc24e', 1, 1)}
      ${grad('gGr', '#f6f6f6', '#a4a4a4', 1, 1)}
      ${grad('gSilk', '#c4c4c4', '#f8f8f8', 1, 0)}
      ${grad('gGn', '#8ee48e', '#0f9a1f', 1, 1)}
      ${grad('gSky', '#e4effa', '#a9c8ea', 1, 1)}
      ${grad('gSt', '#c5d8f0', '#4a7ac6', 1, 1)}
      ${grad('gLav', '#ffffff', '#d4d4f4', 1, 1)}
      ${grad('gUn', '#5da2e6', '#1f56b0', 1, 1)}
      ${grad('gWin', '#9cc0ec', '#ffffff', 0, 1)}
      ${grad('gSide', '#5a74a8', '#7c9ad0', 1, 0)}
      <linearGradient id="gBand" x1="0" y1="0" x2="0" y2="1">
        <stop offset="0" stop-color="#cfe6a8"></stop><stop offset=".55" stop-color="#f6e48c"></stop><stop offset="1" stop-color="#ee9c4c"></stop>
      </linearGradient>
    </defs></svg>`;
  }

  private renderRail() {
    const yellowCube = (x: number, y: number, s: number) => svg`
      <path d="M${x} ${y + s * 0.3} L${x + s * 0.5} ${y} L${x + s} ${y + s * 0.3} L${x + s} ${y + s} L${x + s * 0.5} ${y + s * 1.25} L${x} ${y + s} Z" fill="#f6dc50" stroke="#a88a20" stroke-width=".7"></path>
      <path d="M${x} ${y + s * 0.3} L${x + s * 0.5} ${y + s * 0.6} L${x + s} ${y + s * 0.3} M${x + s * 0.5} ${y + s * 0.6} V${y + s * 1.25}" fill="none" stroke="#a88a20" stroke-width=".7"></path>`;
    return html`
      <div class="rail">
        <div class="top">
          <svg width="35" height="188" viewBox="0 232 35 188">
            <g fill="#333">
              <circle cx="8" cy="255" r="11.5" fill="none" stroke="#333" stroke-width="5"></circle>
              <path d="M5 238 h6 v5 h-6 Z M5 267 h6 v5 h-6 Z M18 252 h5 v6 h-5 Z M-6 252 h5 v6 h-5 Z M16 241 l4 4 -4 4 -4 -4 Z M16 261 l4 4 -4 4 -4 -4 Z"></path>
              <circle cx="8" cy="255" r="2.5"></circle>
            </g>
            ${yellowCube(-6, 301, 10)}
            ${yellowCube(0, 311, 12)}
            <path d="M14 323 H33" stroke="#222"></path>
            <path d="M0 337 H8" stroke="#2a3ab0"></path>
            ${yellowCube(12, 331, 12)}
            <path d="M0 366 L9 376 L0 386 Z M24 366 L24 386 L10 376 Z" fill="#1414c8"></path>
            <path d="M9 365 V411" stroke="#222" stroke-dasharray="2 1.5"></path>
            <rect x="-2" y="394" width="9" height="16" fill="#f6ea1e" stroke="#666"></rect>
            <path d="M12 391 L29 410 L12 410 Z" fill="#cc1212"></path>
          </svg>
        </div>
        <div class="active">
          <svg width="36" height="67" viewBox="0 422 36 67">
            <path d="M-2 437 V462 Q4 466 9 462 V437 Z" fill="#c05aa0"></path>
            <ellipse cx="3" cy="437" rx="6" ry="3" fill="#d8a0d0" stroke="#999" stroke-width=".4"></ellipse>
            <path d="M13 452 H32 M0 467 H9" stroke="#222"></path>
            <circle cx="18" cy="467" r="8" fill="none" stroke="#6a3a6a"></circle>
            <circle cx="18" cy="467" r="3" fill="none" stroke="#6a3a6a"></circle>
          </svg>
        </div>
        <div class="bottom">
          <svg width="35" height="230" viewBox="0 490 35 230">
            <path d="M-2 512 L6 500 L14 500 L8 512 L8 541 L-2 541 Z" fill="#eef4c8"></path>
            <rect x="-2" y="512" width="13" height="30" fill="#2ecb2e" stroke="#1a9a1a"></rect>
            <path d="M-2 532 H10 M-2 536 H10" stroke="#159015"></path>
            <path d="M11 512 L18 501 L32 501 L26 512 Z" fill="#e8f0f8" stroke="#7ac"></path>
            <rect x="11" y="512" width="15" height="30" fill="#2f8cdc" stroke="#1668b0"></rect>
            <path d="M26 512 L32 501 V530 L26 542 Z" fill="#5eaef0"></path>
            <path d="M12 518 H25 M12 524 H25 M12 530 H25" stroke="#1668b0"></path>
            <circle cx="10" cy="599" r="21" fill="url(#gGr)" stroke="#6c6c6c"></circle>
            <circle cx="10" cy="599" r="16" fill="url(#gSky)" stroke="#555"></circle>
            <path d="M10 587 V599 H22" fill="none" stroke="#111" stroke-width="2"></path>
            <circle cx="10" cy="599" r="2.4" fill="#111"></circle>
            <path d="M2 654 L8 646 L22 644 L28 650 L20 650 L14 658 L6 676 L-2 672 Z" fill="#ddd" stroke="#333"></path>
            <path d="M-3 660 L14 682 Q22 688 26 682 L20 682 L17 676 L22 674 Q16 664 10 672 L0 652 Z" fill="#c8ccd2" stroke="#333"></path>
            <path d="M0 678 L8 678 L3 687 L0 687 Z" fill="#e67a28"></path>
          </svg>
        </div>
      </div>
    `;
  }

  private renderNav() {
    const empty = Array.from({ length: TREE_ROWS - TREE.length });
    return html`
      <div class="nav">
        <div class="nav-head"><span>部件导航器</span><i class="maxi"></i></div>
        <div class="table">
          <div class="row head">
            <div class="c1">名称<i class="sort"></i></div>
            <div class="c2">最新</div>
            <div class="c3">附...</div>
          </div>
          <div class="body">
            ${TREE.map(n => this.node(n))}
            ${empty.map(
              () => html`<div class="row"><div class="c1"></div><div class="c2"></div><div class="c3"></div></div>`
            )}
            <svg class="wires" width="202" height="280" viewBox="0 0 202 280" fill="none" stroke="#a8a8a8" stroke-dasharray="1 1">
              <path d="M12.5 14 V182 M12.5 14 H25 M12.5 42 H25 M12.5 70 H28 M12.5 98 H28 M12.5 126 H25 M12.5 154 H25 M12.5 182 H25"></path>
              <path d="M37.5 196 V266 M37.5 210 H51 M37.5 238 H51 M37.5 266 H51"></path>
            </svg>
          </div>
        </div>
      </div>
    `;
  }

  private renderModel() {
    const head = (x: number, y: number, dx: number, dy: number) => {
      // arrow head pointing along (dx, dy), widest a little behind the tip
      const px = -dy * 3.5, py = dx * 3.5;
      return svg`<path d="M${x} ${y} L${x - dx * 10 + px} ${y - dy * 10 + py} L${x - dx * 16 + px * 0.5} ${y - dy * 16 + py * 0.5} L${x - dx * 16 - px * 0.5} ${y - dy * 16 - py * 0.5} L${x - dx * 10 - px} ${y - dy * 10 - py} Z" fill="#0a0aa8"></path>`;
    };
    return html`
      <svg width="1149" height="577" viewBox="326 232 1149 577">
        <path d="M569 460 L562 488 L599 726 L600 729 L607 699 Z" fill="url(#gSide)"></path>
        <path d="M607 699 L1285 701 L1280 730 L600 729 Z" fill="#3a4a6c"></path>
        <path d="M600 729 L884 729 L886 730 L1280 730" fill="none" stroke="#22304c"></path>
        <path d="M569 460 L1246 462 L1285 701 L607 699 Z" fill="#b7f8fe"></path>
        <path d="M569 460.5 L607 699" fill="none" stroke="#5f82c8"></path>
        <path d="M569 460.5 L703 460.5 L1139 461.5 L1246 462.5 L1285 701 L934 700.5 L607 699" fill="none" stroke="#3e62d8" stroke-width="2"></path>
        <path d="M649.5 541 L799 541.7 L812 619 L662 619 Z" fill="none" stroke="#938a68" stroke-width="1.8" stroke-dasharray="9 2.5 2 2.5"></path>
        <g fill="none" stroke="#14189a" stroke-width="1.1">
          <path d="M937.5 537 L1002.6 537 L993 580 L1001 632 L935.6 632 L945 583 Z"></path>
          <path d="M937.5 537 L925.6 580 L935.6 632"></path>
          <path d="M924 580 H1045 M928 578 L945 500 M928 582 L942 672"></path>
        </g>
        ${head(947, 496, 0.21, -0.98)}
        ${head(1056, 580, 1, 0)}
        ${head(942.5, 683, 0.1, 0.99)}
        <g fill="#4a6fa8" font-size="10" font-family="Liberation Sans, sans-serif">
          <text x="944" y="495">Z</text><text x="1061" y="585">Y</text><text x="939" y="692">X</text>
        </g>
        <g>
          <path d="M1228 714 L1264 735 L1264 775 L1228 796 L1193 775 L1193 735 Z" fill="#8ecbec" opacity=".72"></path>
          <path d="M1193 735 Q1230 712 1264 775 M1228 714 Q1195 745 1228 796 M1264 735 Q1240 790 1193 775" fill="none" stroke="#fff" stroke-width=".8" opacity=".6"></path>
          <path d="M1228 732 L1248 744 L1248 768 L1228 780 L1208 768 L1208 744 Z" fill="none" stroke="#e4e4e6" stroke-width="4"></path>
          <path d="M1228 737 L1243 746 L1228 755 L1213 746 Z" fill="#bfe0f4"></path>
          <path d="M1213 746 L1228 755 L1228 773 L1213 764 Z" fill="#a4d2ee"></path>
          <path d="M1243 746 L1228 755 L1228 773 L1243 764 Z" fill="#78c0ea"></path>
        </g>
      </svg>
      <div class="mark"><b>3D世界网</b><span>WWW.3DSJW.COM</span></div>
    `;
  }

  render() {
    return html`
      ${this.renderDefs()}
      <div class="bar quick">
        ${this.bar(QUICK)}
        <span class="title">『NX11』宁波荣新安圣机械有限公司 - 建模 - [_model5.prt（修改的）]</span>
      </div>
      <div class="badge">78</div>
      <div class="tabs">
        <div class="file">文件(F)</div>
        <div class="home">主页</div>
        ${TABS.map(t => html`<div>${t}</div>`)}
      </div>
      <div class="ribbon">
        <div class="group first">
          <div class="cmds">${FEATURES.map(c => this.cmd(c))}</div>
          <div class="glabel">特征</div>
          <i class="drop gexp"></i>
        </div>
        <div class="group second">
          <div class="cmds">${SYNC.map(c => this.cmd(c))}</div>
          <div class="glabel">同步建模</div>
          <i class="drop gexp"></i>
        </div>
        <div class="group third">
          <div class="cmds">${LAST.map(c => this.cmd(c))}</div>
        </div>
      </div>
      <div class="bar commandbar">${this.bar(COMMANDS)}</div>
      <div class="main">
        ${this.renderRail()}
        ${this.renderNav()}
        <div class="canvas">${this.renderModel()}</div>
      </div>
    `;
  }
}
